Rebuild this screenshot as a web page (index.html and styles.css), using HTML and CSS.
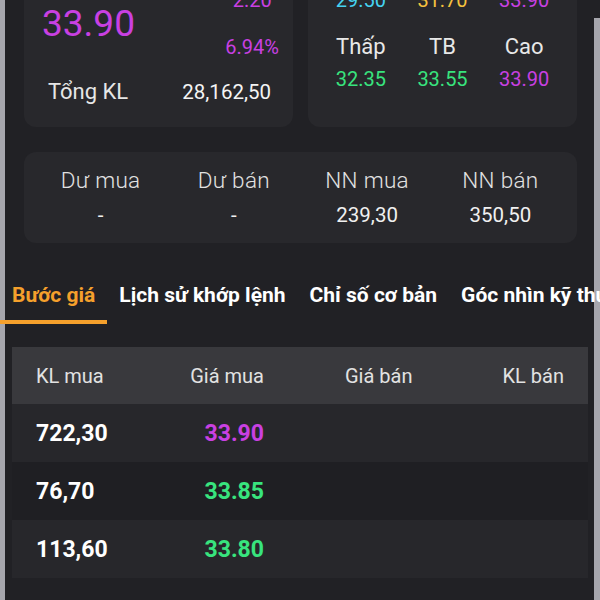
FILE: index.html
```html
<!DOCTYPE html>
<html lang="vi">
<head>
<meta charset="utf-8">
<title>Bước giá</title>
<link rel="stylesheet" href="styles.css">
</head>
<body>
<div class="screen">
  <div class="summary">
    <section class="card quote">
      <div class="quote-main">
        <div class="price purple">33.90</div>
        <div class="change">
          <span class="purple">2.20</span>
          <span class="purple">6.94%</span>
        </div>
      </div>
      <div class="quote-vol">
        <span class="label">Tổng KL</span>
        <span class="value">28,162,50</span>
      </div>
    </section>
    <section class="card range">
      <div class="range-row">
        <span class="num cyan">29.50</span>
        <span class="num yellow">31.70</span>
        <span class="num purple">33.90</span>
      </div>
      <div class="range-row labels">
        <span class="label">Thấp</span>
        <span class="label">TB</span>
        <span class="label">Cao</span>
      </div>
      <div class="range-row">
        <span class="num green">32.35</span>
        <span class="num green">33.55</span>
        <span class="num purple">33.90</span>
      </div>
    </section>
  </div>

  <section class="card stats">
    <div class="stat"><span class="label">Dư mua</span><span class="value">-</span></div>
    <div class="stat"><span class="label">Dư bán</span><span class="value">-</span></div>
    <div class="stat"><span class="label">NN mua</span><span class="value">239,30</span></div>
    <div class="stat"><span class="label">NN bán</span><span class="value">350,50</span></div>
  </section>
</div>

<nav class="tabs">
  <span class="tab active">Bước giá</span>
  <span class="tab">Lịch sử khớp lệnh</span>
  <span class="tab">Chỉ số cơ bản</span>
  <span class="tab">Góc nhìn kỹ thuật</span>
</nav>

<div class="book">
  <div class="book-row head">
    <span class="c1">KL mua</span>
    <span class="c2">Giá mua</span>
    <span class="c3">Giá bán</span>
    <span class="c4">KL bán</span>
  </div>
  <div class="book-row odd">
    <span class="c1">722,30</span>
    <span class="c2 purple">33.90</span>
    <span class="c3"></span>
    <span class="c4"></span>
  </div>
  <div class="book-row even">
    <span class="c1">76,70</span>
    <span class="c2 green">33.85</span>
    <span class="c3"></span>
    <span class="c4"></span>
  </div>
  <div class="book-row odd">
    <span class="c1">113,60</span>
    <span class="c2 green">33.80</span>
    <span class="c3"></span>
    <span class="c4"></span>
  </div>
</div>
</body>
</html>
```

FILE: styles.css
```css
html, body {
  margin: 0;
  padding: 0;
}

body {
  width: 600px;
  height: 600px;
  overflow: hidden;
  font-family: Roboto, "Noto Sans", sans-serif;
  color: #e6e6e6;
  background:
    linear-gradient(#a6a6ad, #a6a6ad) left top / 5px 100% no-repeat,
    linear-gradient(#a6a6ad, #a6a6ad) right 0 top 18px / 6px 100% no-repeat,
    #212125;
}

.purple { color: #c940e2; }
.green { color: #38e47e; }
.cyan { color: #45d3f1; }
.yellow { color: #f4c13e; }

.screen {
  padding: 0 23px 0 24px;
}

.summary {
  display: grid;
  grid-template-columns: 1fr 1fr;
  gap: 15px;
  margin-top: -24px;
}

.card {
  background: #28282c;
  border-radius: 12px;
}

.quote {
  padding: 12px 0 22px;
}

.quote-main {
  display: flex;
  justify-content: space-between;
  align-items: center;
  padding: 0 14px 0 18px;
}

.price {
  font-size: 37px;
  line-height: 46px;
}

.change {
  display: flex;
  flex-direction: column;
  align-items: center;
  gap: 23px;
  font-size: 20px;
  line-height: 24px;
}

.quote-vol {
  display: flex;
  justify-content: space-between;
  align-items: center;
  margin-top: 20px;
  padding: 0 22px 0 24px;
  line-height: 26px;
}

.quote-vol .label {
  font-size: 22px;
}

.quote-vol .value {
  font-size: 20.5px;
  color: #f4f4f4;
}

.range {
  padding: 12px 12px 0;
}

.range-row {
  display: grid;
  grid-template-columns: repeat(3, 1fr);
  justify-items: center;
  line-height: 24px;
}

.range-row.labels {
  margin-top: 23px;
  margin-bottom: 8px;
}

.range-row .label {
  font-size: 22px;
  color: #e8e8e8;
}

.range-row .num {
  font-size: 20px;
}

.stats {
  display: grid;
  grid-template-columns: repeat(4, 1fr);
  margin-top: 25px;
  padding: 15px 10px;
}

.stat {
  display: flex;
  flex-direction: column;
  align-items: center;
  gap: 9px;
  line-height: 26px;
}

.stat .label {
  font-size: 22.5px;
  font-weight: 300;
  letter-spacing: 0.3px;
  color: #e2e2e2;
}

.stat .value {
  font-size: 20.5px;
  color: #f0f0f0;
}

.tabs {
  display: flex;
  margin-top: 26px;
  white-space: nowrap;
  overflow: hidden;
}

.tab {
  padding: 12px 12px 11px;
  font-size: 21px;
  line-height: 28px;
  font-weight: 700;
  color: #ffffff;
  border-bottom: 4px solid transparent;
}

.tab.active {
  color: #f5a02c;
  border-bottom-color: #f5a02c;
}

.book {
  margin: 23px 12px 0;
}

.book-row {
  display: grid;
  grid-template-columns: repeat(4, 1fr);
  align-items: center;
  padding: 0 24px;
  height: 58px;
}

.book-row.head {
  height: 57px;
  background: #39393d;
  font-size: 20px;
  color: #e2e2e2;
}

.book-row.odd { background: #27272b; }
.book-row.even { background: #1f1f23; }

.book-row.odd,
.book-row.even {
  font-size: 23px;
  font-weight: 700;
  color: #ffffff;
}

.c2 {
  text-align: right;
  padding-right: 36px;
}

.c3 {
  padding-left: 45px;
}

.c4 {
  text-align: right;
}
```
